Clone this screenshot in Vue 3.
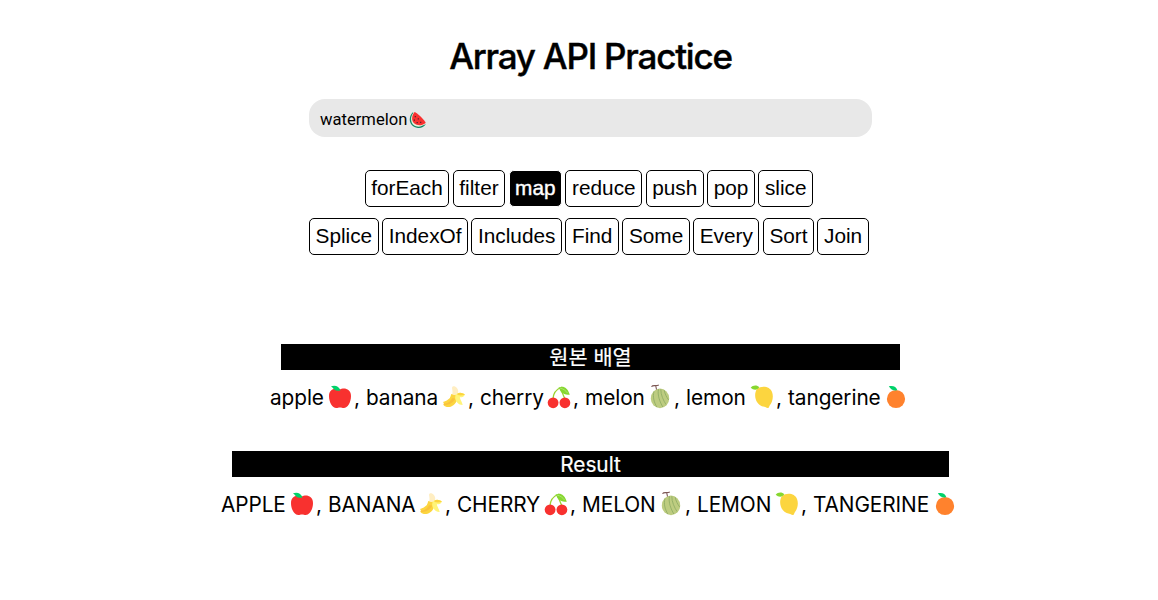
<script setup>
const methodRows = [
  ['forEach', 'filter', 'map', 'reduce', 'push', 'pop', 'slice'],
  ['Splice', 'IndexOf', 'Includes', 'Find', 'Some', 'Every', 'Sort', 'Join'],
]
const active = 'map'
const lists = [
  {
    title: '원본 배열',
    kind: 'source',
    items: [['apple', 96], ['banana', 114], ['cherry', 105], ['melon', 101], ['lemon', 102], ['tangerine', 123]],
  },
  {
    title: 'Result',
    kind: 'result',
    items: [['APPLE', 107], ['BANANA', 129], ['CHERRY', 125], ['MELON', 115], ['LEMON', 116], ['TANGERINE', 147]],
  },
]
</script>

<template>
  <main class="page">
    <h1>Array API Practice</h1>
    <div class="field">
      <span>watermelon</span>
      <svg class="slice" viewBox="0 0 18 18">
        <path d="M4.3 1A10 10 0 0 0 16.8 13.2C15 16 11.5 17.4 8 16.7C3 15.7 0 11.4 .9 6.7C1.3 4.3 2.5 2.2 4.3 1Z" fill="#128765" />
        <path d="M4.8 1.2C.9 5.5 1.4 11.3 4.6 14C8 16.6 12.7 16 16.5 12.8Z" fill="#e8f2dd" />
        <path d="M5.6 .9C7 .6 16.8 10 16.7 12C12.7 14.9 8.4 15 5.4 12.6C2.2 9.7 2.4 4.7 5.6 .9Z" fill="#f83130" />
        <path d="M6.3 5.1v1.2M5.4 8.6v1.2M9.3 7.3v1.2M8.2 11v1.2M11.7 10.7v1.2" stroke="#522229" stroke-width="1.2" />
      </svg>
    </div>

    <div class="methods">
      <div v-for="(row, i) in methodRows" :key="i" class="row">
        <button v-for="name in row" :key="name" :class="{ active: name === active }">{{ name }}</button>
      </div>
    </div>

    <section v-for="list in lists" :key="list.kind" :class="['list', list.kind]">
      <h2>{{ list.title }}</h2>
      <div class="items">
        <div v-for="([name, width], i) in list.items" :key="name" class="item" :style="{ width: width + 'px' }">
          <span class="word">{{ name }}</span>
          <svg class="fruit" viewBox="0 0 24 24">
            <g v-if="i === 0">
              <path d="M12 4.6C15 2.6 23 3 23 11C23 17.5 19.5 23 15.8 23C14.3 23 13.5 22.4 12 22.4S9.7 23 8.2 23C4.5 23 1 17.5 1 11C1 3 9 2.6 12 4.6Z" fill="#f8312f" />
              <path d="M3 1.3C7-.2 11.3 1.2 12.4 5.4C8 6.5 5.7 4.8 4.7 2.8Z" fill="#00d26a" />
            </g>
            <g v-else-if="i === 1">
              <path d="M11 9C8 14 4 16.3 1.5 16.7C1 17 1.3 18 2 18.6L1.5 20C4.5 24 12.8 22.3 15 15L16 9Z" fill="#fcd53f" />
              <path d="M10.5 12C9 16.5 5.5 18.5 2 18.6L1.5 20C6 20.6 12 18 14 12Z" fill="#f9c23c" />
              <path d="M10 3C10 1 11.7.8 13 1.5C16.6 3.5 16.7 6.5 15.8 10L10 10C11 7 10.3 5 10 3Z" fill="#ffeec2" />
              <path d="M9 9.5C11.5 10.5 14 10 15.5 8.5C18 7 20.5 8 23 9.5C22 12 20 12.5 17.8 12.3C18.5 15.5 20.3 17.5 20.7 20C16.5 20 13.5 16.5 13 12.5C11 12.5 9.6 11.5 9 9.5Z" fill="#fff478" />
              <path d="M9.3 9C11 10 12.5 10 13.5 10L13 13.5L8 13ZM15.5 8.5C18 7 20.5 8 23 9.5C21 10.5 18.5 10.8 15.5 10Z" fill="#fcd53f" />
            </g>
            <g v-else-if="i === 2">
              <path d="M6 14C6.2 9 9 4.5 14 2.5C14.2 6 16 9.5 18 14" fill="none" stroke="#9bd330" stroke-width="1.3" />
              <path d="M10.5 3.3C15 0 20.5 2 22.8 9.8C17.5 9.8 13 7.8 12.5 3.5Z" fill="#86d72f" />
              <path d="M13 3C17 4 19 6 20.5 8" fill="none" stroke="#b8e986" stroke-width=".7" />
              <circle cx="6.1" cy="17.8" r="5.4" fill="#f8312f" />
              <circle cx="17.9" cy="17.8" r="5.4" fill="#f8312f" />
            </g>
            <g v-else-if="i === 3">
              <ellipse cx="12" cy="13.4" rx="9.2" ry="9.8" fill="#bdcc80" />
              <path d="M6 6.5C4.4 12 6.3 18 9 22.2M10.5 4.2C9.2 10.5 12 17 14.8 22M12.8 4.2C12.7 10 15.5 15.5 18 19.5M16.2 5.2C17 9.3 18.5 12 20.7 15" fill="none" stroke="#8ba962" stroke-width=".8" />
              <path d="M3.5 1.8C5-.7 7.5 1.7 10.8-.1M7.7 .7L8.5 4.5" fill="none" stroke="#7d5855" stroke-width="1.1" />
            </g>
            <g v-else-if="i === 4">
              <path d="M7 4C11.5.5 20 1 22.2 7.5C23.8 12.5 22 17.5 20 20C19 21.3 19.2 22.8 18 23C16.5 23.2 16 22.1 14.3 21.8C5.5 20.7 3 9.5 7 4Z" fill="#fcd53f" />
              <path d="M.7 2.8C3-.3 7.5.1 9.2 2.3C7.5 5.5 3.5 5.5 .7 2.8Z" fill="#86d72f" />
            </g>
            <g v-else>
              <circle cx="12" cy="14" r="9.1" fill="#ff822d" />
              <path d="M4.8 1.3C8.7.2 12.3 1.3 13.4 5.3C9.6 5.9 6.7 4.7 4.8 1.3Z" fill="#00d26a" />
            </g>
          </svg>
          <span v-if="i < list.items.length - 1" class="comma">,</span>
        </div>
      </div>
    </section>
  </main>
</template>

<style>
body {
  margin: 0;
  background: #fff;
  overflow: hidden;
}
</style>

<style scoped>
.page {
  box-sizing: border-box;
  width: 1181px;
  height: 600px;
  padding-top: 34px;
  display: flex;
  flex-direction: column;
  align-items: center;
  color: #000;
  font-family: Inter, "Noto Sans CJK KR", sans-serif;
}
h1 {
  margin: 0;
  height: 44px;
  line-height: 44px;
  font-size: 35px;
  font-weight: 500;
  letter-spacing: -1.22px;
  white-space: nowrap;
  -webkit-text-stroke: 0.4px #000;
}
.field {
  box-sizing: border-box;
  width: 563px;
  height: 38px;
  margin-top: 21px;
  padding-left: 11px;
  display: flex;
  align-items: center;
  border-radius: 16px;
  background: #e8e8e8;
  font: 16.6px/20px Roboto, sans-serif;
}
.field span {
  padding-top: 4px;
}
.slice {
  width: 18px;
  height: 18px;
  margin: 3px 0 0 2px;
}
.methods {
  width: 563px;
  margin-top: 33px;
  display: flex;
  flex-direction: column;
  gap: 11px;
}
.row {
  display: flex;
  justify-content: center;
  gap: 3.3px;
  padding-right: 3.3px;
}
button {
  box-sizing: border-box;
  height: 37px;
  margin: 0;
  padding: 0 5.6px 1px;
  border: 1px solid #000;
  border-radius: 5px;
  background: #fff;
  color: #000;
  font: 20.8px/24px "Liberation Sans", Arial, sans-serif;
}
button.active {
  border-color: #fff;
  background: #000;
  color: #fff;
  -webkit-text-stroke: 0.4px #fff;
}
.list {
  display: flex;
  flex-direction: column;
  align-items: center;
}
.source {
  margin-top: 89px;
}
.result {
  margin-top: 39px;
}
h2 {
  box-sizing: border-box;
  margin: 0;
  width: 619px;
  height: 26px;
  padding-top: 1px;
  line-height: 26px;
  background: #000;
  color: #fff;
  font-size: 20.8px;
  font-weight: 400;
  text-align: center;
  -webkit-text-stroke: 0.2px #fff;
}
.result h2 {
  width: 717px;
}
.items {
  display: flex;
  height: 42px;
  padding-top: 14px;
  box-sizing: border-box;
}
.item {
  display: flex;
  height: 28px;
  flex: none;
  white-space: nowrap;
  font-size: 20.8px;
  line-height: 28px;
}
.word {
  flex: 1;
  letter-spacing: -0.08px;
}
.fruit {
  width: 24px;
  height: 24px;
  margin: 1px 14.4px 0 0;
  flex: none;
  overflow: visible;
}
.comma {
  width: 12px;
  margin-left: -12px;
}
.item:last-child .fruit {
  margin-right: 3px;
}
</style>
